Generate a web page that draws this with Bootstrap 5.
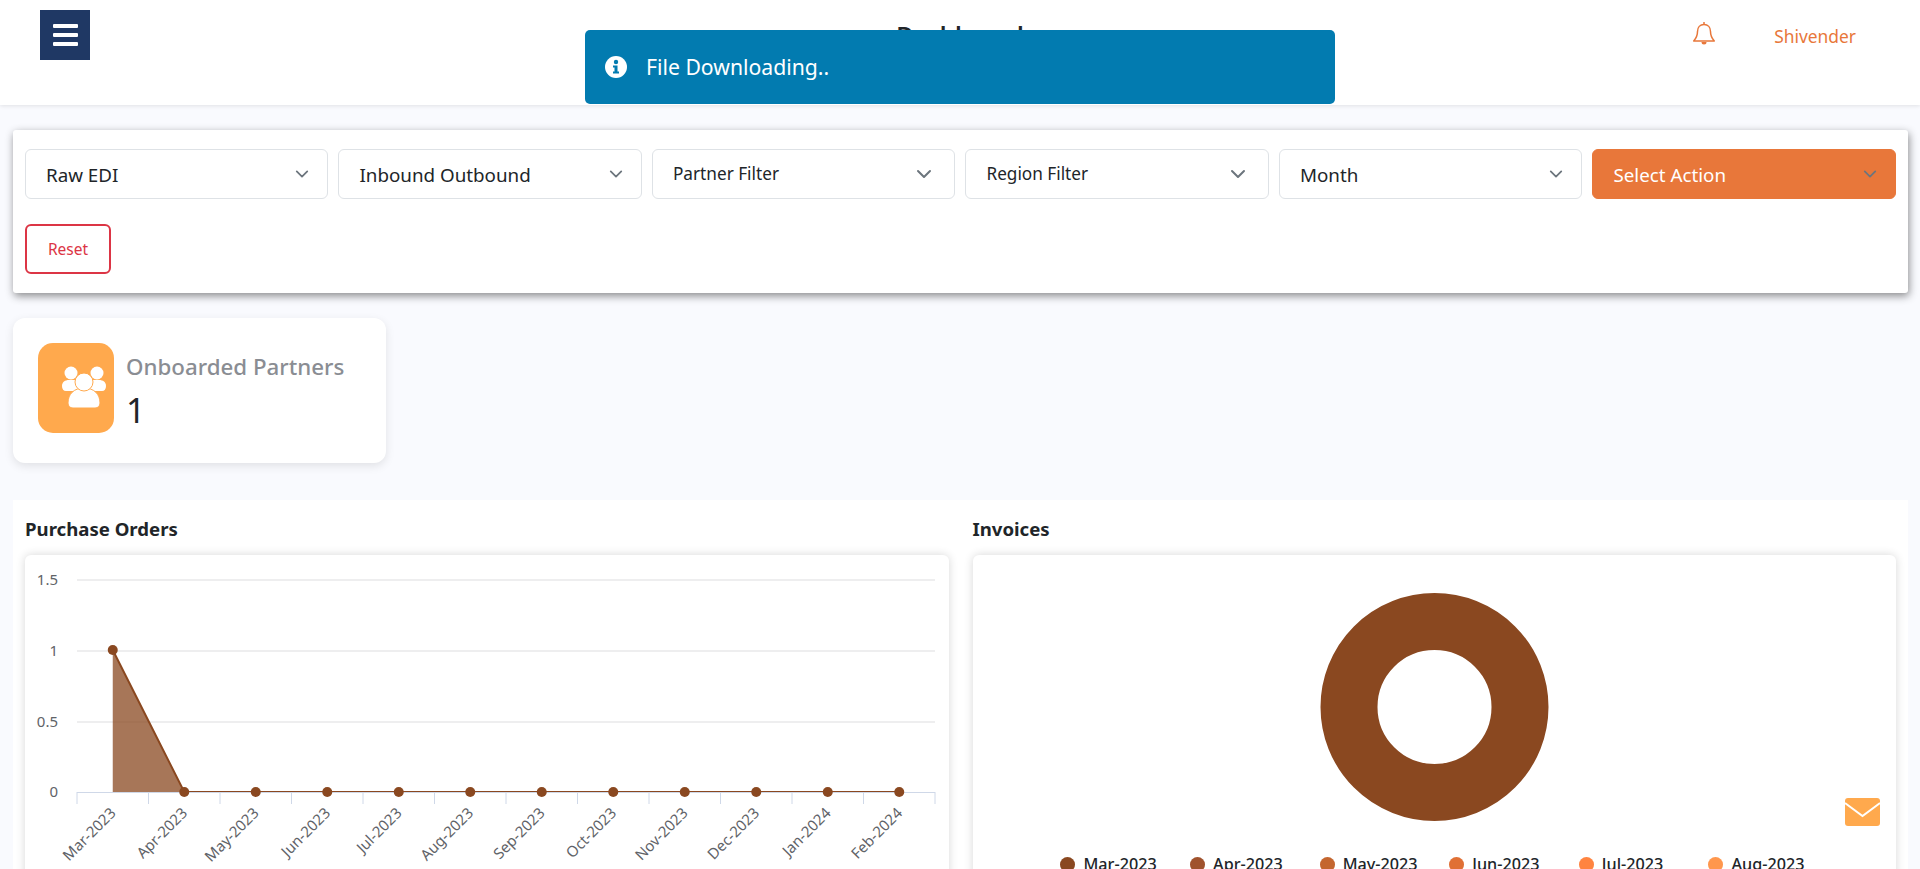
<!DOCTYPE html>
<html lang="en">

<head>
  <meta charset="UTF-8">
  <meta name="viewport" content="width=device-width, initial-scale=1.0">
  <title>Dashboard</title>
  <link href="https://cdn.jsdelivr.net/npm/bootstrap@5.3.2/dist/css/bootstrap.min.css" rel="stylesheet">
  <style>
    html, body {
      height: 100vh;
      overflow: hidden;
    }

    body {
      font-family: "Noto Sans", "Open Sans", sans-serif;
      background-color: #f9fafe;
      color: #212529;
    }

    .top-bar {
      height: 105px;
      background-color: #fff;
      box-shadow: 0 1px 4px rgba(0, 0, 0, 0.1);
      display: grid;
      grid-template-columns: 1fr auto 1fr;
      padding: 10px 40px 0;
    }

    .menu-btn {
      width: 50px;
      height: 50px;
      background-color: #1f3864;
      border: 0;
      padding: 14px 12px 0 13px;
      display: flex;
      flex-direction: column;
      gap: 5px;
    }

    .menu-btn span {
      display: block;
      height: 4px;
      width: 25px;
      background-color: #fff;
      border-radius: 1px;
    }

    .page-title {
      font-size: 24px;
      font-weight: 600;
      margin: 11px 0 0;
    }

    .user-box {
      color: #e8773a;
      font-size: 17.4px;
      gap: 58px;
      padding: 11px 24px 0 0;
    }

    .user-name {
      margin-top: 2px;
    }

    .toast-msg {
      top: 30px;
      left: 585px;
      width: 750px;
      height: 74px;
      background-color: #027bb0;
      color: #fff;
      font-size: 21.2px;
      border-radius: 5px;
      padding: 0 20px;
      gap: 19px;
      z-index: 20;
    }

    .page-body {
      padding: 25px 12px 0 13px;
    }

    .filter-card {
      background-color: #fff;
      border-radius: 3px;
      padding: 19px 12px;
      box-shadow: 1px 3px 8px rgba(0, 0, 0, 0.45);
    }

    .filter-row {
      --bs-gutter-x: 10px;
    }

    .filter-select {
      height: 50px;
      font-size: 18.8px;
      padding: 6px 40px 4px 20px;
      color: #212529;
      background-position: right 16px center;
      background-size: 18px 14px;
      background-image: url("data:image/svg+xml,%3csvg xmlns='http://www.w3.org/2000/svg' viewBox='0 0 16 16'%3e%3cpath fill='none' stroke='%236c757d' stroke-linecap='round' stroke-linejoin='round' stroke-width='2' d='m2 5 6 6 6-6'/%3e%3c/svg%3e");
    }

    .filter-select.small-text {
      font-size: 17.2px;
      background-position: right 20px center;
      background-size: 20px 16px;
      padding-top: 5px;
      padding-bottom: 5px;
    }

    .filter-select.action-select {
      background-color: #e8773a;
      border-color: #e8773a;
      color: #fff;
    }

    .reset-btn {
      width: 86px;
      height: 50px;
      margin-top: 25px;
      padding-top: 8px;
      border: 2px solid #dc3545;
      font-size: 15.5px;
      color: #dc3545;
      background-color: #fff;
    }

    .kpi-card {
      width: 373px;
      height: 145px;
      margin-top: 25px;
      padding: 25px;
      background-color: #fff;
      border-radius: 12px;
      box-shadow: 0 3px 10px rgba(0, 0, 0, 0.1);
      gap: 12px;
    }

    .kpi-icon {
      width: 76px;
      height: 90px;
      background-color: #ffa94d;
      border-radius: 15px;
      flex-shrink: 0;
    }

    .kpi-label {
      font-size: 22.3px;
      font-weight: 500;
      color: #8a8d93;
      margin-top: 8px;
      line-height: 32px;
      white-space: nowrap;
    }

    .kpi-value {
      font-size: 34px;
      line-height: 54px;
    }

    .chart-section {
      margin-top: 37px;
      padding: 17px 0 0;
      background-color: #fff;
    }

    .chart-title {
      font-size: 18.6px;
      font-weight: 700;
      line-height: 24px;
      margin: 0 0 14px;
    }

    .chart-card {
      background-color: #fff;
      border-radius: 6px;
      box-shadow: 0 0 10px rgba(0, 0, 0, 0.16);
      height: 420px;
    }

    .chart-card svg {
      display: block;
    }

    .axis-text {
      font-family: "Noto Sans", sans-serif;
      font-size: 15px;
      fill: #5f6368;
    }

    .donut-legend {
      display: grid;
      grid-template-columns: repeat(6, 129.6px);
      justify-content: center;
      padding-left: 30px;
      row-gap: 6px;
      font-size: 16.2px;
      font-weight: 500;
      line-height: 24px;
    }

    .legend-dot {
      width: 15px;
      height: 15px;
      border-radius: 50%;
      flex-shrink: 0;
    }

    .mail-float {
      right: 40px;
      top: 798px;
      z-index: 10;
    }
  </style>
</head>

<body>
  <header class="top-bar">
    <div>
      <button class="menu-btn" type="button" aria-label="Menu"><span></span><span></span><span></span></button>
    </div>
    <h1 class="page-title">Dashboard</h1>
    <div class="user-box d-flex justify-content-end align-items-start">
      <svg width="24" height="26" viewBox="0 0 24 26" fill="none" stroke="#e8773a" stroke-width="1.5">
        <path d="M12 1v2.5" />
        <path d="M12 3.5c-4 0-6.5 3-6.5 7 0 5-1.5 7-3.8 9.5h20.6c-2.3-2.5-3.8-4.500-3.800-9.500 0-4-2.500-7-6.500-7z" stroke-linejoin="round" />
        <path d="M9.500 21a2.500 2.500 0 0 0 5 0z" fill="#e8773a" stroke="none" />
      </svg>
      <span class="user-name">Shivender</span>
    </div>
  </header>

  <div class="toast-msg position-fixed d-flex align-items-center" role="alert">
    <svg width="22" height="22" viewBox="0 0 22 22">
      <circle cx="11" cy="11" r="11" fill="#fff" />
      <circle cx="11" cy="6" r="2.200" fill="#027bb0" />
      <path d="M8 9.500h4.500v6H14v2H8v-2h1.500v-4H8z" fill="#027bb0" />
    </svg>
    <span>File Downloading..</span>
  </div>

  <main class="page-body">
    <section class="filter-card">
      <div class="row filter-row">
        <div class="col-2">
          <select class="form-select filter-select"><option>Raw EDI</option></select>
        </div>
        <div class="col-2">
          <select class="form-select filter-select"><option>Inbound Outbound</option></select>
        </div>
        <div class="col-2">
          <select class="form-select filter-select small-text"><option>Partner Filter</option></select>
        </div>
        <div class="col-2">
          <select class="form-select filter-select small-text"><option>Region Filter</option></select>
        </div>
        <div class="col-2">
          <select class="form-select filter-select"><option>Month</option></select>
        </div>
        <div class="col-2">
          <select class="form-select filter-select action-select"><option>Select Action</option></select>
        </div>
      </div>
      <button class="btn reset-btn d-block" type="button">Reset</button>
    </section>

    <section class="kpi-card d-flex">
      <div class="kpi-icon">
        <svg width="76" height="90" viewBox="0 0 76 90">
          <g fill="#fff">
            <circle cx="33" cy="30" r="6.500" />
            <circle cx="59" cy="30" r="6.500" />
            <path d="M24 43c0-4 3-6 7-6h9v11H28c-2.500 0-4-2-4-5z" />
            <path d="M68 43c0-4-3-6-7-6h-9v11h12c2.500 0 4-2 4-5z" />
            <g stroke="#ffa94d" stroke-width="1">
              <path d="M30 60c0-9 6-15 16-15s16 6 16 15c0 3-2 5-5 5H35c-3 0-5-2-5-5z" />
              <circle cx="46" cy="39" r="9" />
            </g>
          </g>
        </svg>
      </div>
      <div>
        <div class="kpi-label">Onboarded Partners</div>
        <div class="kpi-value">1</div>
      </div>
    </section>

    <section class="chart-section row mx-0">
      <div class="col-6">
        <h2 class="chart-title">Purchase Orders</h2>
        <div class="chart-card">
          <svg id="lineChart" width="923" height="420" viewBox="0 0 923 420"></svg>
        </div>
      </div>
      <div class="col-6">
        <h2 class="chart-title">Invoices</h2>
        <div class="chart-card">
          <svg width="923" height="297" viewBox="0 0 923 297">
            <circle cx="461.500" cy="152" r="85.500" fill="none" stroke="#8a4820" stroke-width="57" />
          </svg>
          <div class="donut-legend" id="donutLegend"></div>
        </div>
      </div>
    </section>
  </main>

  <svg class="mail-float position-fixed" width="35" height="28" viewBox="0 0 35 28">
    <rect width="35" height="28" rx="3" fill="#ffa94d" />
    <path d="M0 5l17.500 13L35 5" fill="none" stroke="#fff" stroke-width="2" />
  </svg>

  <script src="https://cdn.jsdelivr.net/npm/bootstrap@5.3.2/dist/js/bootstrap.bundle.min.js"></script>
  <script>
    const months = ["Mar-2023", "Apr-2023", "May-2023", "Jun-2023", "Jul-2023", "Aug-2023", "Sep-2023", "Oct-2023", "Nov-2023", "Dec-2023", "Jan-2024", "Feb-2024"];
    const values = [1, 0, 0, 0, 0, 0, 0, 0, 0, 0, 0, 0];
    const legendColors = ["#8a4820", "#a0522d", "#c4662f", "#e07035", "#ff8440", "#ff974d", "#ffa94d", "#ffb866", "#ffc680", "#ffd199", "#ffddb3", "#ffe8cc"];

    // chart origin is the card's top left corner
    const left = 52, step = 71.5, yZero = 237, unit = 142;
    let svg = "";

    [[1.5, 25], [1, 96], [0.5, 167]].forEach(([label, y]) => {
      svg += `<line x1="${left}" x2="910" y1="${y}" y2="${y}" stroke="#e8e8ea" stroke-width="1.500"/>`;
      svg += `<text class="axis-text" x="33" y="${y + 5}" text-anchor="end">${label}</text>`;
    });
    svg += `<text class="axis-text" x="33" y="${yZero + 5}" text-anchor="end">0</text>`;

    const xAt = i => left + step / 2 + i * step;
    const yAt = v => yZero - v * unit;
    const pts = values.map((v, i) => `${xAt(i)},${yAt(v)}`).join(" ");

    svg += `<polygon points="${xAt(0)},${yZero} ${pts} ${xAt(11)},${yZero}" fill="#8a4820" fill-opacity="0.75"/>`;
    svg += `<polyline points="${pts}" fill="none" stroke="#8a4820" stroke-width="2"/>`;
    svg += `<line x1="${left}" x2="910" y1="${yZero + 0.5}" y2="${yZero + 0.5}" stroke="#cfd8e8" stroke-width="1"/>`;

    for (let i = 0; i <= 12; i++) {
      const x = left + i * step;
      svg += `<line x1="${x}" x2="${x}" y1="${yZero}" y2="${yZero + 12}" stroke="#cfd8e8"/>`;
    }

    months.forEach((m, i) => {
      svg += `<circle cx="${xAt(i)}" cy="${yAt(values[i])}" r="5" fill="#8a4820"/>`;
      const tx = xAt(i) + 4, ty = yZero + 22;
      svg += `<text class="axis-text" x="${tx}" y="${ty}" text-anchor="end" transform="rotate(-45 ${tx} ${ty})">${m}</text>`;
    });

    document.getElementById("lineChart").innerHTML = svg;

    document.getElementById("donutLegend").innerHTML = months.map((m, i) =>
      `<div class="d-flex align-items-center gap-2"><span class="legend-dot" style="background-color:${legendColors[i]}"></span>${m}</div>`
    ).join("");
  </script>
</body>

</html>
